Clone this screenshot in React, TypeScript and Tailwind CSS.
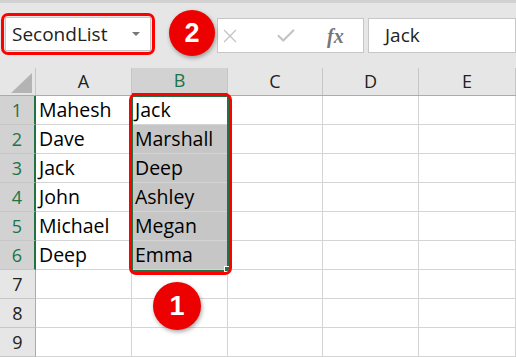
import { X, Check } from "lucide-react";

const cols = ["A", "B", "C", "D", "E"];
const colW = ["w-[96px]", "w-[96px]", "w-[95px]", "w-[96px]", "flex-1"];

const colA = ["Mahesh", "Dave", "Jack", "John", "Michael", "Deep", "", "", ""];
const colB = ["Jack", "Marshall", "Deep", "Ashley", "Megan", "Emma", "", "", ""];

const font = { fontFamily: '"Open Sans", "Noto Sans", sans-serif' };

function Badge({ n, className }: { n: string; className: string }) {
  return (
    <div
      className={`absolute rounded-full bg-[#ec0000] text-white flex items-center justify-center text-[27px] font-semibold shadow-[1px_2px_4px_rgba(0,0,0,0.35)] ${className}`}
      style={{ fontFamily: '"Liberation Sans", Arial, sans-serif' }}
    >
      {n}
    </div>
  );
}

export default function App() {
  return (
    <div className="relative w-[516px] h-[357px] overflow-hidden bg-white" style={font}>
      {/* formula bar */}
      <div className="h-[68px] bg-[#e6e6e6] border-t-[3px] border-[#d2d2d2] flex items-start pt-[10px] pl-[1px]">
        <div className="w-[154px] h-[42px] border-[3px] border-[#ff0000] rounded-[7px] p-[1px]">
          <div className="h-full bg-white border border-[#c6c6c6] flex items-center justify-between pl-[6px] pr-[10px]">
            <span className="text-[19px] text-[#222]">SecondList</span>
            <span className="w-0 h-0 border-l-[4px] border-r-[4px] border-t-[4px] border-l-transparent border-r-transparent border-t-[#777]" />
          </div>
        </div>
        <div className="ml-[62px] mt-[5px] w-[147px] h-[35px] bg-white border border-[#c6c6c6] flex items-center">
          <X size={22} strokeWidth={1.5} className="text-[#c4c4c4] ml-[1px]" />
          <Check size={22} strokeWidth={2.4} className="text-[#c4c4c4] ml-[34px]" />
          <span
            className="ml-[30px] text-[20px] italic font-bold text-[#777]"
            style={{ fontFamily: '"Liberation Serif", serif' }}
          >
            fx
          </span>
        </div>
        <div className="ml-[4px] mt-[5px] flex-1 h-[35px] bg-white border border-[#c6c6c6] flex items-center pl-[16px]">
          <span className="text-[19px] text-[#222]">Jack</span>
        </div>
      </div>

      {/* column headers */}
      <div className="flex h-[28px] bg-[#e6e6e6] border-b border-[#ababab]">
        <div className="w-[36px] border-r border-[#c6c6c6] relative">
          <svg className="absolute left-[11px] top-[5px]" width="21" height="20">
            <polygon points="21,0 21,20 0,20" fill="#b4b4b4" />
          </svg>
        </div>
        {cols.map((c, i) => (
          <div
            key={c}
            className={`${colW[i]} border-r border-[#c6c6c6] flex items-center justify-center text-[18px] ${
              c === "B" ? "bg-[#d2d2d2] text-[#217346] border-b-2 border-b-[#217346]" : "text-[#222]"
            }`}
          >
            {c}
          </div>
        ))}
      </div>

      {/* rows */}
      {colA.map((a, r) => {
        const sel = r < 6;
        return (
          <div key={r} className="flex h-[29px]">
            <div
              className={`w-[36px] border-b border-[#c6c6c6] flex items-center justify-center text-[18px] ${
                sel
                  ? "bg-[#d2d2d2] text-[#217346] border-r-2 border-r-[#217346]"
                  : "bg-[#e6e6e6] text-[#222] border-r border-r-[#ababab]"
              }`}
            >
              {r + 1}
            </div>
            <div className="w-[96px] border-r border-b border-[#d4d4d4] flex items-center pl-[3px] text-[19.5px] text-black">
              {a}
            </div>
            <div
              className={`w-[96px] border-r border-b border-[#d4d4d4] flex items-center pl-[3px] text-[19.5px] text-black ${
                sel && r > 0 ? "bg-[#c6c6c6]" : ""
              }`}
            >
              {colB[r]}
            </div>
            <div className="w-[95px] border-r border-b border-[#d4d4d4]" />
            <div className="w-[96px] border-r border-b border-[#d4d4d4]" />
            <div className="flex-1 border-r border-b border-[#d4d4d4]" />
          </div>
        );
      })}

      {/* selection */}
      <div className="absolute left-[131px] top-[95px] w-[98px] h-[177px] border-2 border-[#217346]" />
      <div className="absolute left-[224px] top-[266px] w-[6px] h-[6px] bg-[#217346] border border-white" />
      <div className="absolute left-[129px] top-[93px] w-[103px] h-[182px] border-[3px] border-[#ff0000] rounded-[7px]" />

      <Badge n="2" className="left-[169px] top-[10px] w-[46px] h-[46px]" />
      <Badge n="1" className="left-[153px] top-[282px] w-[48px] h-[48px]" />
    </div>
  );
}
